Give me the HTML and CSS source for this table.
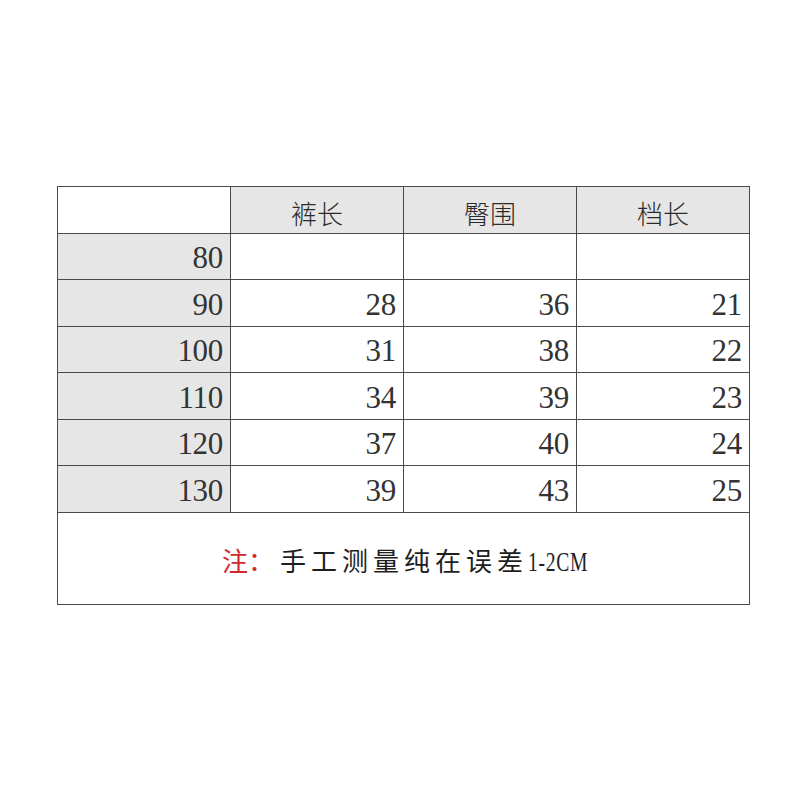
FILE: index.html
```html
<!DOCTYPE html>
<html lang="zh-CN">
<head>
<meta charset="utf-8">
<title>尺码表</title>
<link rel="stylesheet" href="styles.css">
</head>
<body>
<div class="page">
  <table class="size-table">
    <colgroup>
      <col class="c"><col class="c"><col class="c"><col class="c">
    </colgroup>
    <tr class="r-a head">
      <td class="corner"></td>
      <td class="th">裤长</td>
      <td class="th">臀围</td>
      <td class="th">档长</td>
    </tr>
    <tr class="r-b">
      <td class="size">80</td>
      <td class="num"></td>
      <td class="num"></td>
      <td class="num"></td>
    </tr>
    <tr class="r-a">
      <td class="size">90</td>
      <td class="num">28</td>
      <td class="num">36</td>
      <td class="num">21</td>
    </tr>
    <tr class="r-b">
      <td class="size">100</td>
      <td class="num">31</td>
      <td class="num">38</td>
      <td class="num">22</td>
    </tr>
    <tr class="r-a">
      <td class="size">110</td>
      <td class="num">34</td>
      <td class="num">39</td>
      <td class="num">23</td>
    </tr>
    <tr class="r-b">
      <td class="size">120</td>
      <td class="num">37</td>
      <td class="num">40</td>
      <td class="num">24</td>
    </tr>
    <tr class="r-a">
      <td class="size">130</td>
      <td class="num">39</td>
      <td class="num">43</td>
      <td class="num">25</td>
    </tr>
    <tr class="foot">
      <td colspan="4" class="note"><span class="red">注：</span><span class="cjk">手工测量纯在误差</span><span class="lat">1-2CM</span></td>
    </tr>
  </table>
</div>
</body>
</html>
```

FILE: styles.css
```css
html, body {
  margin: 0;
  padding: 0;
  background: #ffffff;
}

.page {
  padding: 186px 0 0 57px;
}

.size-table {
  border-collapse: collapse;
  table-layout: fixed;
  width: 693px;
  color: #2a2a2a;
}

.size-table .c {
  width: 173px;
}

.size-table td {
  border: 1px solid #4a4a4a;
  padding: 0;
  box-sizing: border-box;
}

.r-a { height: 47px; }
.r-b { height: 46px; }
.foot { height: 92px; }

.corner {
  background: #ffffff;
}

.th {
  background: #e6e6e6;
  text-align: center;
  font-family: "Noto Sans CJK SC", sans-serif;
  font-weight: 300;
  font-size: 26px;
  padding-top: 5px !important;
}

.size,
.num {
  text-align: right;
  padding-right: 7px !important;
  padding-top: 3px !important;
  font-family: "Liberation Serif", serif;
  font-size: 31px;
  letter-spacing: -0.3px;
  vertical-align: middle;
  color: #333333;
}

.size {
  background: #e6e6e6;
}

.num {
  background: #ffffff;
}

.note {
  text-align: left;
  padding-left: 164px !important;
  padding-top: 1px !important;
  vertical-align: middle;
  font-family: "Noto Sans CJK SC", sans-serif;
  font-size: 26px;
  font-weight: 400;
  color: #1e1e1e;
}

.red {
  color: #d02a2e;
  margin-right: 6px;
}

.cjk {
  letter-spacing: 5px;
}

.lat {
  display: inline-block;
  font-family: "Liberation Serif", serif;
  font-size: 28px;
  letter-spacing: 1px;
  transform: scaleX(0.7);
  transform-origin: left center;
}
```
